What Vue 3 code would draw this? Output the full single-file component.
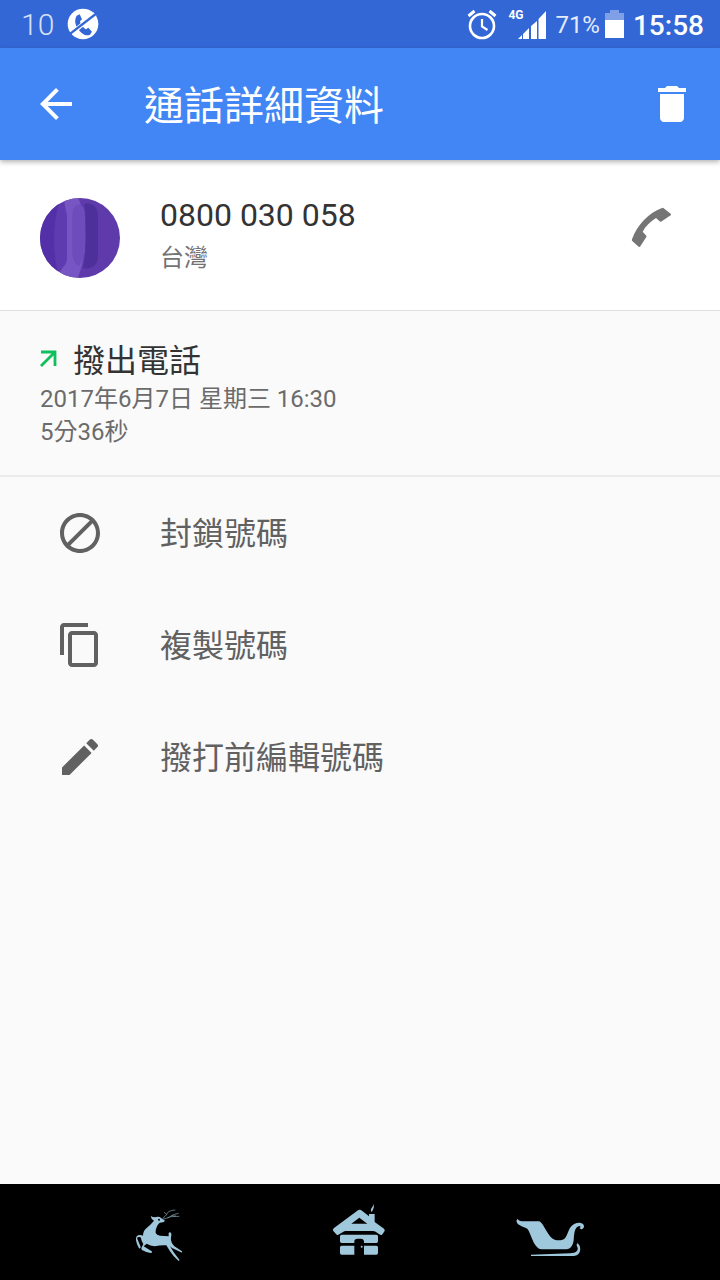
<template>
  <div class="page">
    <!-- 狀態列 -->
    <div class="status-bar">
      <span class="notice-count">10</span>
      <svg class="notice-icon" viewBox="0 0 96 96" aria-hidden="true">
        <circle cx="48" cy="48" r="46" fill="#fff" />
        <path
          d="M29 23l9-4 7 15-6 6c1 8 10 20 18 24l7-5 11 12-6 9c-8 4-18 1-26-6-9-9-16-18-18-29-1-7 0-15 4-22z"
          fill="#3367d6"
        />
        <path d="M14 76L84 18" stroke="#fff" stroke-width="13" />
        <path d="M10 77L90 15" stroke="#3367d6" stroke-width="7" />
      </svg>
      <div class="status-right">
        <svg class="alarm" viewBox="0 0 30 32" fill="none" stroke="#fff" aria-hidden="true">
          <circle cx="15" cy="18" r="12" stroke-width="2.600" />
          <path d="M15 11v7.500l5.500 3.500" stroke-width="2.200" />
          <path d="M1.500 8l6-5M28.500 8l-6-5" stroke-width="3" />
        </svg>
        <div class="signal">
          <span class="network">4G</span>
          <svg class="bars" viewBox="0 0 28 28" fill="#fff" aria-hidden="true">
            <path d="M0 28l4-4v4zM5 28v-5l6-6v11zM13 28V15l6-5v18zM20.500 28V8l7.500-8v28z" />
          </svg>
        </div>
        <span class="battery-text">71%</span>
        <svg class="battery" viewBox="0 0 19 30" aria-hidden="true">
          <path d="M0 4h5V1h9v3h5v8H0z" fill="#7f9fe6" />
          <path d="M0 11h19v18H0z" fill="#fff" />
        </svg>
        <span class="clock">15:58</span>
      </div>
    </div>

    <!-- 標題列 -->
    <header class="app-bar">
      <button class="icon-btn" type="button" aria-label="返回">
        <svg viewBox="0 0 24 24" fill="#fff">
          <path d="M20 11H7.830l5.590-5.590L12 4l-8 8 8 8 1.410-1.410L7.830 13H20v-2z" />
        </svg>
      </button>
      <h1 class="title">通話詳細資料</h1>
      <button class="icon-btn" type="button" aria-label="刪除">
        <svg viewBox="0 0 24 24" fill="#fff">
          <path d="M6 19c0 1.100.9 2 2 2h8c1.100 0 2-.9 2-2V7H6v12zM19 4h-3.500l-1-1h-5l-1 1H5v2h14V4z" />
        </svg>
      </button>
    </header>

    <!-- 聯絡人 -->
    <section class="contact">
      <svg class="avatar" viewBox="0 0 240 240" aria-hidden="true">
        <defs>
          <clipPath id="avatar-clip"><circle cx="120" cy="120" r="120" /></clipPath>
        </defs>
        <g clip-path="url(#avatar-clip)">
          <rect width="240" height="240" fill="#5e3aab" />
          <path d="M0 0h64C36 50 36 190 60 240H0z" fill="#5330a8" />
          <path d="M70 0h45c28 65 28 175-2 240H46c44-50 34-90 34-130S80 40 70 0z" fill="#7755c2" />
          <path d="M60 16C72 22 81 40 81 60v120c0 20-12 32-28 32-14-50-14-140 7-196z" fill="#5f3bb2" />
          <path d="M97 54c0-46 38-46 38 0v106c-6 24-12 36-18 44-14-6-20-20-20-44z" fill="#6f4cbc" />
          <path d="M133 18c28-6 41 12 41 38v116c0 32-20 44-45 38 10-45 12-135 4-192z" fill="#4e309a" />
        </g>
      </svg>
      <div class="contact-info">
        <div class="number">0800 030 058</div>
        <div class="region">台灣</div>
      </div>
      <button class="icon-btn call" type="button" aria-label="撥號">
        <svg viewBox="0 0 144 144" fill="#757575">
          <path d="M106 12l23 18q1 3-1 4L99 53q-2 1-4-1L84 42C68 52 53 66 44 83l11 12q1 2 0 4L37 127q-2 3-5 1L12 110q-1-2 0-4C28 62 60 28 102 12q2-1 4 0z" />
        </svg>
      </button>
    </section>

    <!-- 通話紀錄 -->
    <section class="record">
      <div class="record-type">
        <svg class="arrow" viewBox="0 0 18 18" aria-hidden="true">
          <path d="M1 2h14v14M15 2L1 16" fill="none" stroke="#0fbf5c" stroke-width="2.800" />
        </svg>
        <span>撥出電話</span>
      </div>
      <div class="record-text">2017年6月7日 星期三 16:30</div>
      <div class="record-text">5分36秒</div>
    </section>

    <!-- 操作 -->
    <main class="actions">
      <button v-for="item in actions" :key="item.label" class="action" type="button">
        <svg viewBox="0 0 24 24" fill="#616161" aria-hidden="true">
          <path :d="item.icon" />
        </svg>
        <span>{{ item.label }}</span>
      </button>
    </main>

    <!-- 導覽列 -->
    <nav class="nav-bar">
      <button class="nav-btn" type="button" aria-label="上一頁">
        <svg class="nav-icon" viewBox="0 6 240 240">
          <path
            d="M92 78Q98 82 105 82Q117 78 124 85L134 91Q135 96 129 97L119 98Q113 103 110 112Q105 122 107 129Q110 136 120 137L146 139Q144 129 149 126Q157 129 153 141Q151 149 156 160Q161 169 170 173L186 184Q188 188 183 187L156 174L150 169L160 185L178 209Q179 213 175 212Q160 200 150 184L139 166Q122 165 104 169Q91 168 80 161L71 169L95 184Q99 188 92 189Q79 187 66 180Q62 177 65 172L70 162Q64 153 62 142Q55 139 51 144L62 171Q62 176 57 175Q50 164 48 151Q47 139 54 136Q62 133 69 137Q69 124 79 115Q92 104 102 92Q93 87 92 78Z"
            fill="#a0c8dc"
          />
          <path
            d="M126 90Q132 79 140 74Q141 62 166 60M140 74L132 66M132 87Q150 77 178 79M143 84L160 74L176 70M155 77L168 78"
            fill="none"
            stroke="#88a9ba"
            stroke-width="2"
          />
          <circle cx="117" cy="89" r="3" fill="#000" />
        </svg>
      </button>
      <button class="nav-btn" type="button" aria-label="主畫面">
        <svg class="nav-icon" viewBox="0 6 240 240" fill="#a0c8dc">
          <path
            fill-rule="evenodd"
            d="M112 62q7-5 14 0l21 17v-7h17v24l28 20q5 5 0 10l-6 8q-3 3-8-1l-11-8q-4-2-8-2H77q-4 0-8 3l-14 8q-4 2-7-2l-8-9q-4-5 2-9zM94 101h48l-24-18z"
          />
          <path d="M154 65c-5-10 7-13 5-23 6 9 0 16-3 23z" />
          <path d="M65 134h104q5 0 5 5v15q0 5-5 5h-37v-6q-2-7-9-7h-10q-10 0-10 8v5H65q-5 0-5-5v-15q0-5 5-5z" />
          <path
            fill-rule="evenodd"
            d="M65 167h38v27H65q-5 0-5-5v-17q0-5 5-5zM132 167h37q5 0 5 5v17q0 5-5 5h-37zM122 170a3 3 0 1 0 6 0a3 3 0 1 0-6 0z"
          />
        </svg>
      </button>
      <button class="nav-btn" type="button" aria-label="最近使用">
        <svg class="nav-icon sleigh" viewBox="30 6 270 240" fill="#a0c8dc">
          <path
            d="M38 86c4 8 12 8 22 8h43c8 4 15 18 22 30 8 13 14 22 24 25 12 3 26 2 32-6 10-14 10-34 28-42 13-6 28-3 28 8 0 9-10 11-14 5 4-1 5-4 1-6-16 2-16 22-18 42-2 16-9 27-22 28h-75c-20-3-28-34-38-56-5-10-18-10-26-16-9-5-14-13-7-20z"
          />
          <path d="M217 160c8 4 10 15 8 23-3 12-12 15-23 15H78v-4l118-4c16-1 26-8 21-19-2-4-3-8 0-11z" />
        </svg>
      </button>
    </nav>
  </div>
</template>

<script setup>
// 號碼操作選單
const actions = [
  {
    label: '封鎖號碼',
    icon: 'M12 2C6.480 2 2 6.480 2 12s4.480 10 10 10 10-4.480 10-10S17.520 2 12 2zM4 12c0-4.420 3.580-8 8-8 1.850 0 3.550.630 4.900 1.690L5.690 16.900C4.630 15.550 4 13.850 4 12zm8 8c-1.850 0-3.550-.630-4.900-1.690L18.310 7.100C19.370 8.450 20 10.150 20 12c0 4.420-3.580 8-8 8z'
  },
  {
    label: '複製號碼',
    icon: 'M16 1H4c-1.100 0-2 .9-2 2v14h2V3h12V1zm3 4H8c-1.100 0-2 .9-2 2v14c0 1.100.9 2 2 2h11c1.100 0 2-.9 2-2V7c0-1.100-.9-2-2-2zm0 16H8V7h11v14z'
  },
  {
    label: '撥打前編輯號碼',
    icon: 'M3 17.250V21h3.750L17.810 9.940l-3.750-3.750L3 17.250zM20.710 7.040c.390-.390.390-1.020 0-1.410l-2.340-2.340c-.390-.390-1.020-.390-1.410 0l-1.830 1.830 3.750 3.750 1.830-1.830z'
  }
]
</script>

<style>
body {
  margin: 0;
  background: #fafafa;
}
</style>

<style scoped>
.page {
  min-height: 100vh;
  display: flex;
  flex-direction: column;
  background: #fafafa;
  color: #616161;
  font-family: Roboto, "Noto Sans CJK TC", sans-serif;
}

button {
  border: none;
  padding: 0;
  background: none;
  font-family: inherit;
  cursor: pointer;
}

svg {
  display: block;
  flex: none;
}

/* 狀態列 */
.status-bar {
  height: 48px;
  padding: 0 16px 0 21px;
  display: flex;
  align-items: center;
  background: #3367d6;
  color: #fff;
}

.notice-count {
  font-size: 30px;
  font-weight: 300;
  color: #d6e1f7;
}

.notice-icon {
  width: 32px;
  height: 32px;
  margin-left: 13px;
}

.status-right {
  margin-left: auto;
  display: flex;
  align-items: center;
}

.alarm {
  width: 30px;
  height: 32px;
}

.signal {
  display: flex;
  margin-left: 11px;
  padding-top: 2px;
}

.network {
  width: 10px;
  font-size: 12px;
  line-height: 8px;
  font-weight: 700;
}

.bars {
  width: 28px;
  height: 28px;
}

.battery-text {
  margin-left: 9px;
  padding-top: 2px;
  font-size: 24px;
  color: #e4ebfa;
}

.battery {
  width: 19px;
  height: 30px;
  margin-left: 5px;
}

.clock {
  margin-left: 9px;
  padding-top: 2px;
  font-size: 28px;
  font-weight: 500;
}

/* 標題列 */
.app-bar {
  height: 112px;
  padding: 0 24px 0 32px;
  display: flex;
  align-items: center;
  background: #4285f4;
  color: #fff;
  box-shadow: 0 2px 5px rgba(0, 0, 0, 0.3);
  z-index: 1;
}

.icon-btn,
.icon-btn svg {
  width: 48px;
  height: 48px;
}

.title {
  flex: 1;
  margin: 0 0 0 64px;
  padding-top: 6px;
  font-size: 40px;
  line-height: 48px;
  font-weight: 400;
}

/* 聯絡人 */
.contact {
  padding: 32px 44px 31px 40px;
  display: flex;
  background: #fff;
  border-bottom: 1px solid #e0e0e0;
}

.avatar {
  width: 80px;
  height: 80px;
  margin-top: 6px;
}

.contact-info {
  flex: 1;
  margin-left: 40px;
}

.number {
  font-size: 32px;
  line-height: 46px;
  color: #333;
}

.region {
  font-size: 24px;
  line-height: 41px;
  color: #737373;
}

.call {
  margin-top: 12px;
}

/* 通話紀錄 */
.record {
  padding: 29px 40px 26px;
  border-bottom: 2px solid #ebebeb;
}

.record-type {
  display: flex;
  align-items: center;
  gap: 15px;
  font-size: 32px;
  line-height: 43px;
  color: #333;
}

.arrow {
  width: 18px;
  height: 18px;
  padding-bottom: 6px;
}

.record-text {
  font-size: 24px;
  line-height: 33px;
  color: #6b6b6b;
}

/* 操作 */
.actions {
  flex: 1;
}

.action {
  width: 100%;
  height: 112px;
  padding: 0 56px;
  display: flex;
  align-items: center;
  gap: 56px;
  color: #616161;
  font-size: 32px;
  text-align: left;
}

.action svg {
  width: 48px;
  height: 48px;
}

.action span {
  padding-bottom: 4px;
}

/* 導覽列 */
.nav-bar {
  height: 96px;
  padding: 0 60px;
  display: grid;
  grid-template-columns: repeat(3, 1fr);
  background: #000;
}

.nav-btn {
  display: flex;
  align-items: center;
  justify-content: center;
}

.nav-icon {
  width: 80px;
  height: 80px;
}

.nav-icon.sleigh {
  width: 90px;
}
</style>
